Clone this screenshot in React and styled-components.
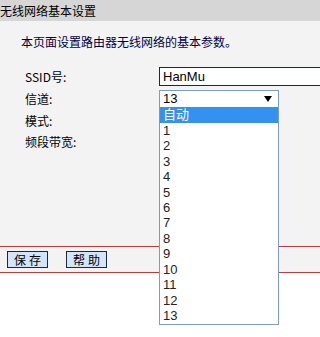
import React from 'react';
import styled, { createGlobalStyle } from 'styled-components';

const GlobalStyle = createGlobalStyle`
  html, body {
    margin: 0;
    padding: 0;
    background: #ffffff;
    overflow: hidden;
  }
  body {
    font-family: "Noto Sans CJK SC", "Liberation Sans", sans-serif;
    font-size: 12px;
  }
`;

const Page = styled.div`
  width: 100%;
  min-width: 291px;
  height: 337px;
  background: #ffffff;
  overflow: hidden;
`;

const TitleBar = styled.div`
  height: 21px;
  background: #d6d6d6;
  color: #000;
  font-size: 12px;
  line-height: 22px;
  white-space: nowrap;
`;

const Panel = styled.div`
  background: #f3f3f3;
  height: 225px;
  padding-top: 12px;
  box-sizing: border-box;
`;

const Intro = styled.p`
  margin: 0 0 15px 21px;
  color: #000040;
  font-size: 12px;
  line-height: 18px;
  white-space: nowrap;
`;

const Form = styled.div`
  display: grid;
  grid-template-columns: 134px 1fr;
  grid-auto-rows: 21.7px;
  padding-left: 25px;
`;

const Label = styled.div`
  display: flex;
  align-items: center;
  color: #000;
  font-size: 12px;
  white-space: nowrap;
`;

const Cell = styled.div`
  display: flex;
  align-items: center;
  position: relative;
  min-width: 0;
`;

const TextInput = styled.div`
  width: 200px;
  flex-shrink: 0;
  height: 19px;
  box-sizing: border-box;
  border: 1px solid #1e2a22;
  background: #fff;
  font-family: "Liberation Sans", Arial, sans-serif;
  font-size: 13px;
  line-height: 17px;
  padding-left: 3px;
  color: #000;
`;

const Select = styled.div`
  width: 120px;
  height: 18px;
  box-sizing: border-box;
  border: 1px solid #7f9db9;
  background: #fff;
  display: flex;
  align-items: center;
  justify-content: space-between;
  padding: 0 6px 0 3px;
  font-family: "Liberation Sans", Arial, sans-serif;
  font-size: 13px;
  color: #000;
`;

const Arrow = styled.svg`
  width: 8px;
  height: 6px;
`;

const Dropdown = styled.ul`
  position: absolute;
  left: 0;
  top: 19.5px;
  width: 120px;
  margin: 0;
  padding: 0;
  list-style: none;
  box-sizing: border-box;
  border: 1px solid #7f9db9;
  border-top: none;
  background: #fff;
  z-index: 5;
`;

const Option = styled.li`
  height: 15.47px;
  line-height: 15.5px;
  padding-left: 3px;
  font-family: "Liberation Sans", Arial, "Noto Sans CJK SC", sans-serif;
  font-size: 13px;
  color: ${({ active }) => (active ? '#fff' : '#222')};
  background: ${({ active }) => (active ? '#3392f0' : 'transparent')};
`;

const ButtonBar = styled.div`
  height: 27px;
  box-sizing: border-box;
  border-top: 1px solid #c0393b;
  border-bottom: 1px solid #c0393b;
  background: #f3f3f3;
  display: flex;
  align-items: center;
  gap: 18px;
  padding-left: 7px;
`;

const Button = styled.button`
  width: 41px;
  height: 17px;
  box-sizing: border-box;
  padding: 0;
  margin: 0;
  border: 1px solid #1c2a36;
  background: #d3e5f8;
  color: #000;
  font-family: "Noto Sans CJK SC", sans-serif;
  font-size: 12px;
  line-height: 15px;
  letter-spacing: 3px;
  text-indent: 3px;
`;

const channels = ['自动', '1', '2', '3', '4', '5', '6', '7', '8', '9', '10', '11', '12', '13'];

export default function App() {
  return (
    <Page>
      <GlobalStyle />
      <TitleBar>无线网络基本设置</TitleBar>
      <Panel>
        <Intro>本页面设置路由器无线网络的基本参数。</Intro>
        <Form>
          <Label>SSID号:</Label>
          <Cell>
            <TextInput>HanMu</TextInput>
          </Cell>
          <Label>信道:</Label>
          <Cell>
            <Select>
              <span>13</span>
              <Arrow viewBox="0 0 8 6">
                <path d="M0 0 H8 L4 6 Z" fill="#000" />
              </Arrow>
            </Select>
            <Dropdown>
              {channels.map((c, i) => (
                <Option key={c} active={i === 0}>{c}</Option>
              ))}
            </Dropdown>
          </Cell>
          <Label>模式:</Label>
          <Cell />
          <Label>频段带宽:</Label>
          <Cell />
        </Form>
      </Panel>
      <ButtonBar>
        <Button>保存</Button>
        <Button>帮助</Button>
      </ButtonBar>
    </Page>
  );
}
